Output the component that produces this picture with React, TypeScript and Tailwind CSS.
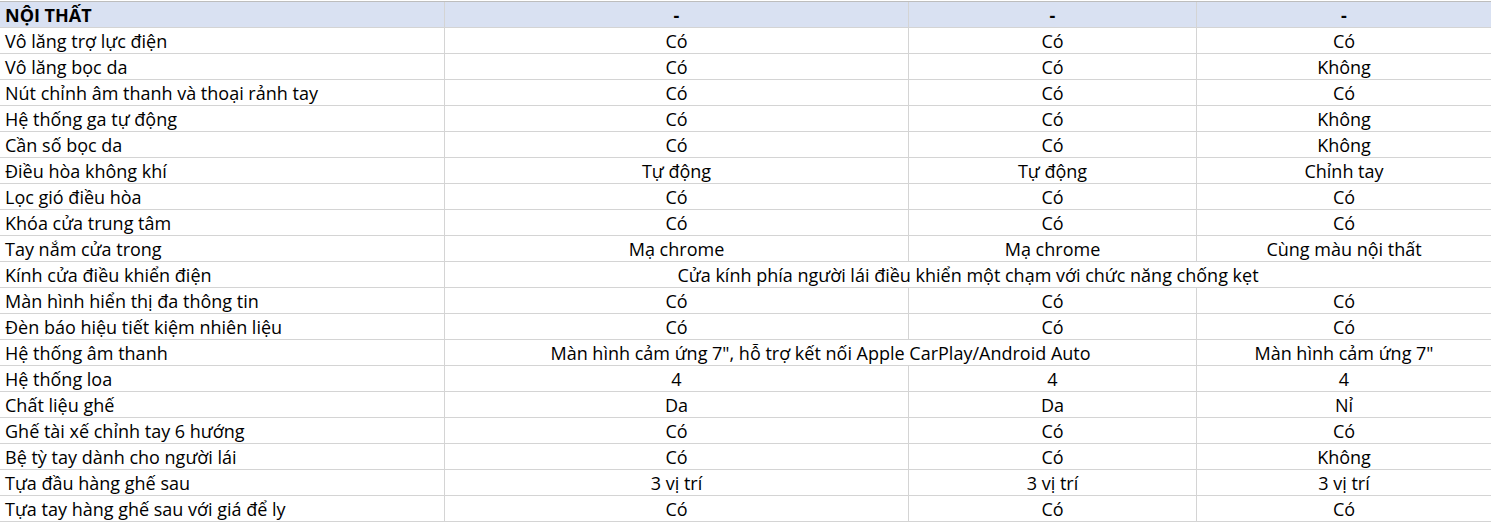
import React from 'react'

type Row = {
  label: string
  cells: { text: string; span?: number }[]
}

const rows: Row[] = [
  { label: 'Vô lăng trợ lực điện', cells: [{ text: 'Có' }, { text: 'Có' }, { text: 'Có' }] },
  { label: 'Vô lăng bọc da', cells: [{ text: 'Có' }, { text: 'Có' }, { text: 'Không' }] },
  { label: 'Nút chỉnh âm thanh và thoại rảnh tay', cells: [{ text: 'Có' }, { text: 'Có' }, { text: 'Có' }] },
  { label: 'Hệ thống ga tự động', cells: [{ text: 'Có' }, { text: 'Có' }, { text: 'Không' }] },
  { label: 'Cần số bọc da', cells: [{ text: 'Có' }, { text: 'Có' }, { text: 'Không' }] },
  { label: 'Điều hòa không khí', cells: [{ text: 'Tự động' }, { text: 'Tự động' }, { text: 'Chỉnh tay' }] },
  { label: 'Lọc gió điều hòa', cells: [{ text: 'Có' }, { text: 'Có' }, { text: 'Có' }] },
  { label: 'Khóa cửa trung tâm', cells: [{ text: 'Có' }, { text: 'Có' }, { text: 'Có' }] },
  { label: 'Tay nắm cửa trong', cells: [{ text: 'Mạ chrome' }, { text: 'Mạ chrome' }, { text: 'Cùng màu nội thất' }] },
  {
    label: 'Kính cửa điều khiển điện',
    cells: [{ text: 'Cửa kính phía người lái điều khiển một chạm với chức năng chống kẹt', span: 3 }],
  },
  { label: 'Màn hình hiển thị đa thông tin', cells: [{ text: 'Có' }, { text: 'Có' }, { text: 'Có' }] },
  { label: 'Đèn báo hiệu tiết kiệm nhiên liệu', cells: [{ text: 'Có' }, { text: 'Có' }, { text: 'Có' }] },
  {
    label: 'Hệ thống âm thanh',
    cells: [
      { text: 'Màn hình cảm ứng 7", hỗ trợ kết nối Apple CarPlay/Android Auto', span: 2 },
      { text: 'Màn hình cảm ứng 7"' },
    ],
  },
  { label: 'Hệ thống loa', cells: [{ text: '4' }, { text: '4' }, { text: '4' }] },
  { label: 'Chất liệu ghế', cells: [{ text: 'Da' }, { text: 'Da' }, { text: 'Nỉ' }] },
  { label: 'Ghế tài xế chỉnh tay 6 hướng', cells: [{ text: 'Có' }, { text: 'Có' }, { text: 'Có' }] },
  { label: 'Bệ tỳ tay dành cho người lái', cells: [{ text: 'Có' }, { text: 'Có' }, { text: 'Không' }] },
  { label: 'Tựa đầu hàng ghế sau', cells: [{ text: '3 vị trí' }, { text: '3 vị trí' }, { text: '3 vị trí' }] },
  { label: 'Tựa tay hàng ghế sau với giá để ly', cells: [{ text: 'Có' }, { text: 'Có' }, { text: 'Có' }] },
]

const spanClass: Record<number, string> = {
  1: 'col-span-1',
  2: 'col-span-2',
  3: 'col-span-3',
}

export default function App() {
  return (
    <div
      className="w-[1491px] h-[524px] overflow-hidden bg-white pt-px text-black text-[18px] leading-none"
      style={{ fontFamily: '"Open Sans", "Noto Sans", sans-serif' }}
    >
      <div className="grid grid-cols-[445px_464px_288px_294px] border-t border-[#bdbdbd]">
        {/* header row */}
        <div className="h-[26px] flex items-center pl-[5px] font-bold bg-[#d9e1f2] border-r border-b border-[#d4d4d4]">
          NỘI THẤT
        </div>
        <div className="h-[26px] flex items-center justify-center font-bold bg-[#d9e1f2] border-r border-b border-[#d4d4d4]">
          -
        </div>
        <div className="h-[26px] flex items-center justify-center font-bold bg-[#d9e1f2] border-r border-b border-[#d4d4d4]">
          -
        </div>
        <div className="h-[26px] flex items-center justify-center font-bold bg-[#d9e1f2] border-b border-[#d4d4d4]">
          -
        </div>

        {rows.map((row) => (
          <React.Fragment key={row.label}>
            <div className="h-[26px] flex items-center pl-[5px] whitespace-nowrap border-r border-b border-[#d4d4d4]">
              {row.label}
            </div>
            {row.cells.map((cell, i) => {
              const isLast = i === row.cells.length - 1
              return (
                <div
                  key={i}
                  className={`h-[26px] flex items-center justify-center whitespace-nowrap border-b border-[#d4d4d4] ${
                    spanClass[cell.span ?? 1]
                  } ${isLast ? '' : 'border-r'}`}
                >
                  {cell.text}
                </div>
              )
            })}
          </React.Fragment>
        ))}
      </div>
    </div>
  )
}
